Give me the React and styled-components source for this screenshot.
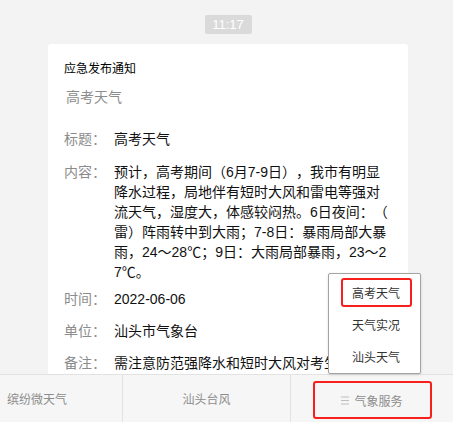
import styled, { createGlobalStyle } from "styled-components"

const GlobalStyle = createGlobalStyle`
    html, body {
        margin: 0;
        padding: 0;
        height: 100%;
        overflow: hidden;
        background: #f3f3f3;
        font-family: "Liberation Sans", "Noto Sans CJK SC", sans-serif;
        text-spacing-trim: space-all;
    }
`

const Page = styled.div`
    position: relative;
    height: 422px;
    display: flex;
    flex-direction: column;
    overflow: hidden;
`

const Feed = styled.div`
    flex: 1;
    overflow: hidden;
    display: flex;
    flex-direction: column;
`

const TimePill = styled.div`
    align-self: center;
    margin: 15px 0 10px 3px;
    width: 47px;
    height: 19px;
    border-radius: 2px;
    background: #dadada;
    color: #fff;
    font-size: 13px;
    line-height: 19px;
    text-align: center;
`

const Card = styled.div`
    margin-left: 48px;
    width: 360px;
    background: #fff;
    border-radius: 3px;
    padding: 16px 16px 40px;
    box-sizing: border-box;
`

const Heading = styled.div`
    font-size: 12px;
    line-height: 18px;
    color: #000;
`

const Subtitle = styled.div`
    margin: 9px 0 22px 2px;
    font-size: 14px;
    line-height: 20px;
    color: #8c8c8c;
`

const Row = styled.div`
    display: flex;
    font-size: 14px;
    line-height: 20px;
    margin-bottom: ${props => props.gap}px;
`

const Label = styled.div`
    flex: 0 0 50px;
    color: #8c8c8c;
`

const Value = styled.div`
    flex: 1;
    color: #111;
    word-break: break-all;
    line-break: anywhere;
    padding-right: 2px;
`

const TabBar = styled.div`
    flex: 0 0 48px;
    display: grid;
    grid-template-columns: 122px 168px 1fr;
    background: #f6f6f6;
    border-top: 1px solid #e2e2e2;
    box-sizing: border-box;
`

const Tab = styled.div`
    display: flex;
    justify-content: ${props => props.left ? "flex-start" : "center"};
    align-items: center;
    padding-left: ${props => props.left ? "7px" : "0"};
    border-left: ${props => props.divider ? "1px solid #e2e2e2" : "none"};
    color: #8c8c8c;
    font-size: 12px;
`

const MenuTab = styled.div`
    display: flex;
    justify-content: center;
    align-items: flex-start;
    padding-top: 6px;
    border-left: 1px solid #e2e2e2;
`

const Highlight = styled.div`
    width: 119px;
    height: 38px;
    box-sizing: border-box;
    border: 2px solid #f8201c;
    border-radius: 3px;
    display: flex;
    align-items: center;
    justify-content: center;
    gap: 5px;
    color: #8c8c8c;
    font-size: 12px;
`

const Menu = styled.div`
    position: absolute;
    left: 328px;
    top: 273px;
    width: 93px;
    padding: 2px 0 0;
    box-sizing: border-box;
    height: 101px;
    background: #fff;
    border: 1px solid #a3a3a3;
    border-radius: 2px;
    box-shadow: 0 1px 3px rgba(0, 0, 0, 0.12);
`

const MenuItem = styled.div`
    height: 32px;
    display: flex;
    align-items: center;
    justify-content: center;
`

const MenuText = styled.div`
    width: 71px;
    height: 29px;
    box-sizing: border-box;
    border: 2px solid ${props => props.marked ? "#f8201c" : "transparent"};
    border-radius: 3px;
    display: flex;
    align-items: center;
    justify-content: center;
    margin-left: 3px;
    font-size: 12px;
    color: #333;
`

const MenuIcon = () => (
    <svg width="8" height="9" viewBox="0 0 8 9">
        <path d="M0 1h8M0 4.5h8M0 8h8" stroke="#bdbdbd" strokeWidth="1" />
    </svg>
)

const App = () => {
    return (
        <Page>
            <GlobalStyle />
            <Feed>
                <TimePill>11:17</TimePill>
                <Card>
                    <Heading>应急发布通知</Heading>
                    <Subtitle>高考天气</Subtitle>
                    <Row gap={13}>
                        <Label>标题：</Label>
                        <Value>高考天气</Value>
                    </Row>
                    <Row gap={7}>
                        <Label>内容：</Label>
                        <Value>预计，高考期间（6月7-9日），我市有明显降水过程，局地伴有短时大风和雷电等强对流天气，湿度大，体感较闷热。6日夜间：（雷）阵雨转中到大雨；7-8日：暴雨局部大暴雨，24～28℃；9日：大雨局部暴雨，23～27℃。</Value>
                    </Row>
                    <Row gap={12}>
                        <Label>时间：</Label>
                        <Value>2022-06-06</Value>
                    </Row>
                    <Row gap={12}>
                        <Label>单位：</Label>
                        <Value>汕头市气象台</Value>
                    </Row>
                    <Row gap={12}>
                        <Label>备注：</Label>
                        <Value>需注意防范强降水和短时大风对考生出行的不利影响。</Value>
                    </Row>
                </Card>
            </Feed>
            <TabBar>
                <Tab left>缤纷微天气</Tab>
                <Tab divider>汕头台风</Tab>
                <MenuTab>
                    <Highlight>
                        <MenuIcon />
                        气象服务
                    </Highlight>
                </MenuTab>
            </TabBar>
            <Menu>
                <MenuItem><MenuText marked>高考天气</MenuText></MenuItem>
                <MenuItem><MenuText>天气实况</MenuText></MenuItem>
                <MenuItem><MenuText>汕头天气</MenuText></MenuItem>
            </Menu>
        </Page>
    )
}

export default App
